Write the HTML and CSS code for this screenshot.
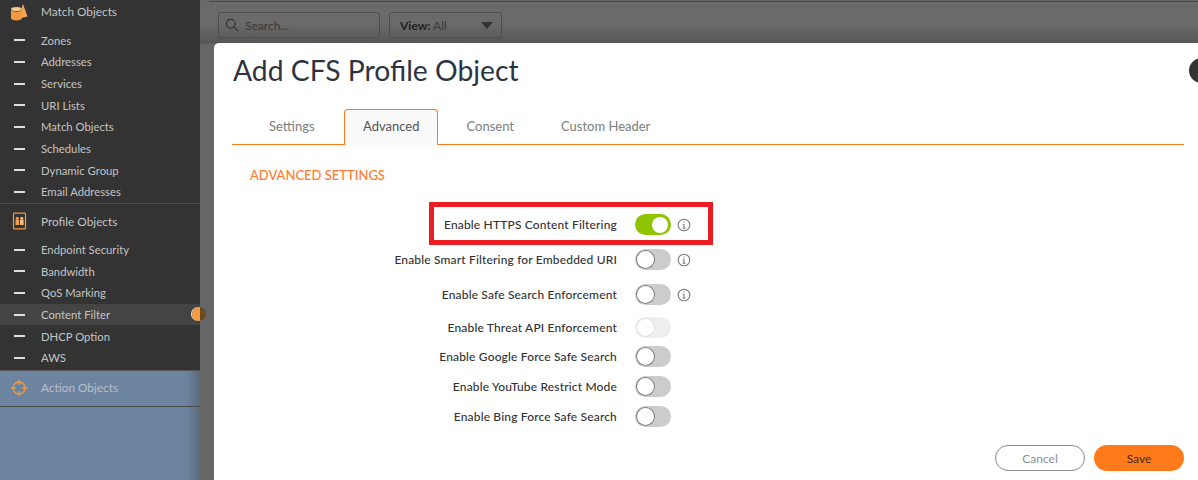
FILE: index.html
```html
<!DOCTYPE html>
<html lang="en">
<head>
<meta charset="utf-8">
<title>Add CFS Profile Object</title>
<link rel="stylesheet" href="styles.css">
</head>
<body>
<div class="app">
  <nav class="sidebar">
    <div class="group">
      <div class="group-head group-head-first">
        <svg class="group-icon" viewBox="0 0 20 20"><path d="M14 2 18.500 14.500 13 15.800 13 5z" fill="#f6a64f"/><ellipse cx="7.500" cy="7" rx="5.500" ry="2" fill="#f9c98c"/><path d="M2 7.800c1 1.300 3.100 2 5.500 2s4.500-.7 5.500-2V16c0 1.400-2.400 2.400-5.500 2.400S2 17.400 2 16z" fill="#f29a3e"/></svg>
        <span>Match Objects</span>
      </div>
      <ul class="items">
        <li class="item"><i class="dash"></i>Zones</li>
        <li class="item"><i class="dash"></i>Addresses</li>
        <li class="item"><i class="dash"></i>Services</li>
        <li class="item"><i class="dash"></i>URI Lists</li>
        <li class="item"><i class="dash"></i>Match Objects</li>
        <li class="item"><i class="dash"></i>Schedules</li>
        <li class="item"><i class="dash"></i>Dynamic Group</li>
        <li class="item"><i class="dash"></i>Email Addresses</li>
      </ul>
    </div>
    <div class="group group-profile">
      <div class="group-head">
        <svg class="group-icon" viewBox="0 0 20 20"><rect x="4.500" y="2.200" width="12" height="15.600" rx=".8" fill="none" stroke="#f29a3e" stroke-width="1.200"/><rect x="6.500" y="8.700" width="3.600" height="5.300" fill="#f4a14a"/><circle cx="8.300" cy="7.300" r="1.500" fill="#f4a14a"/><rect x="11" y="8.700" width="3.600" height="5.300" fill="#f8c080"/><circle cx="12.800" cy="7.300" r="1.500" fill="#f8c080"/></svg>
        <span>Profile Objects</span>
      </div>
      <ul class="items">
        <li class="item"><i class="dash"></i>Endpoint Security</li>
        <li class="item"><i class="dash"></i>Bandwidth</li>
        <li class="item"><i class="dash"></i>QoS Marking</li>
        <li class="item item-active"><i class="dash"></i>Content Filter<b class="marker"></b></li>
        <li class="item"><i class="dash"></i>DHCP Option</li>
        <li class="item"><i class="dash"></i>AWS</li>
      </ul>
    </div>
    <div class="group-action">
      <div class="action-head">
        <svg class="group-icon" viewBox="0 0 20 20" fill="none" stroke="#f29a3e" stroke-width="1.300"><circle cx="10" cy="10" r="6"/><path d="M10 1.800v5M10 13.200v5M1.800 10h5M13.200 10h5"/></svg>
        <span>Action Objects</span>
      </div>
    </div>
  </nav>
  <main class="main">
    <div class="toolbar">
      <div class="search">
        <svg class="search-icon" viewBox="0 0 16 16" fill="none" stroke="#333" stroke-width="1.400"><circle cx="6.500" cy="6.500" r="5"/><path d="m10.200 10.200 4.800 4.800"/></svg>
        <span>Search...</span>
      </div>
      <div class="view"><span><b>View:</b> All</span><i class="caret"></i></div>
    </div>
    <section class="modal">
      <h1 class="title">Add CFS Profile Object</h1>
      <div class="close"></div>
      <div class="tabs">
        <div class="tab tab-first">Settings</div>
        <div class="tab tab-active">Advanced</div>
        <div class="tab">Consent</div>
        <div class="tab">Custom Header</div>
      </div>
      <h2 class="section">ADVANCED SETTINGS</h2>
      <div class="form">
        <label class="label">Enable HTTPS Content Filtering</label><span class="toggle toggle-on"></span><svg class="info" viewBox="0 0 14 14"><circle cx="7" cy="7" r="5.800"/><path d="M7 6.200v4M5.600 10.300h2.800M5.800 6.200H7M7 3.400v1.200"/></svg>
        <label class="label">Enable Smart Filtering for Embedded URI</label><span class="toggle"></span><svg class="info" viewBox="0 0 14 14"><circle cx="7" cy="7" r="5.800"/><path d="M7 6.200v4M5.600 10.300h2.800M5.800 6.200H7M7 3.400v1.200"/></svg>
        <label class="label">Enable Safe Search Enforcement</label><span class="toggle"></span><svg class="info" viewBox="0 0 14 14"><circle cx="7" cy="7" r="5.800"/><path d="M7 6.200v4M5.600 10.300h2.800M5.800 6.200H7M7 3.400v1.200"/></svg>
        <label class="label">Enable Threat API Enforcement</label><span class="toggle toggle-disabled"></span><span></span>
        <label class="label">Enable Google Force Safe Search</label><span class="toggle"></span><span></span>
        <label class="label">Enable YouTube Restrict Mode</label><span class="toggle"></span><span></span>
        <label class="label">Enable Bing Force Safe Search</label><span class="toggle"></span><span></span>
      </div>
      <div class="highlight"></div>
      <div class="actions">
        <button class="btn btn-cancel">Cancel</button>
        <button class="btn btn-save">Save</button>
      </div>
    </section>
  </main>
</div>
</body>
</html>
```
FILE: styles.css
```css
* { box-sizing: border-box; }
html, body { margin: 0; height: 480px; overflow: hidden; }
body { font-family: "Lato", "Noto Sans", sans-serif; color: #333; background: #666; }
.app { display: flex; height: 480px; width: 1198px; overflow: hidden; }

.sidebar { width: 200px; flex: none; display: flex; flex-direction: column; background: #333; color: #c4c4c4; font-size: 11.300px; position: relative; z-index: 1; }
.group-head { height: 35px; display: flex; align-items: center; font-size: 11.800px; }
.group-head-first { height: 23px; margin-bottom: 6.500px; }
.group-icon { width: 20px; height: 20px; margin: 0 12px 0 9px; flex: none; }
.group-profile { border-top: 1px solid #4d4d4d; }
.items { list-style: none; margin: 0; padding: 0; }
.item { height: 21.670px; display: flex; align-items: center; position: relative; }
.dash { width: 11px; height: 2px; background: #ddd; margin: 0 16px 0 14px; }
.item-active { background: #444; }
.marker { position: absolute; right: -6px; top: 3px; width: 14px; height: 14px; border-radius: 50%; background: linear-gradient(90deg, #f59b42 0 57%, #6a4a20 57%); box-shadow: -1px 0 0 #eee; }
.group-action { flex: 1; margin-top: 1px; background: linear-gradient(90deg, #6d84a0 93%, #5a6a7e); border-top: 1px solid #555; }
.action-head { height: 36px; padding-bottom: 1px; display: flex; align-items: center; border-bottom: 1px solid #4a4a4a; font-size: 11.800px; color: #b6c0cc; }

.main { flex: 1; position: relative; background: linear-gradient(#6a6a6a 0 24px, #555 43px, #666 44px); min-width: 0; }
.toolbar { display: flex; gap: 9px; height: 43px; padding: 11px 0 0 18px; border-top: 1px solid #666; position: relative; }
.toolbar::before { content: ""; position: absolute; left: 9px; right: 0; top: 0; height: 1px; background: #6b3f1c; }
.search, .view { height: 26px; border: 1px solid #4e4e4e; border-radius: 3px; display: flex; align-items: center; font-size: 12px; color: #3a3a3a; }
.search { width: 162px; padding-left: 6px; gap: 6px; }
.search-icon { width: 14px; height: 14px; }
.view { width: 113px; padding: 0 8px 0 10px; justify-content: space-between; }
.view b { font-weight: 700; color: #222; }
.caret { border: 6.500px solid transparent; border-top: 7px solid #333; border-bottom: 0; }

.modal { position: absolute; left: 14px; top: 43px; right: 0; bottom: 0; background: #fff; border-radius: 5px 0 0 0; padding: 0 14px 0 18px; }
.title { margin: 8px 0 0 1px; height: 44px; font-size: 28.300px; line-height: 38px; font-weight: 400; color: #2d3340; }
.close { position: absolute; right: -16px; top: 15px; width: 25px; height: 25px; border-radius: 50%; background: #333; }
.tabs { margin-top: 14px; height: 36px; display: flex; gap: 9px; padding-left: 18px; border-bottom: 1px solid #ff7a1a; }
.tab { height: 36px; padding: 0 18px 4px; display: flex; align-items: center; font-size: 13px; color: #7d7d7d; border: 1px solid transparent; border-bottom: 0; border-radius: 4px 4px 0 0; }
.tab-first { width: 85px; }
.tab-active { background: #f9f9f9; border-color: #ff7a1a; color: #555; height: 36px; }
.section { margin: 22px 0 0 18px; height: 16px; font-size: 13px; line-height: 16px; font-weight: 500; color: #ff7a2a; }
.form { margin-top: 24px; display: grid; grid-template-columns: 385px 18px 36px 6px 14px; grid-template-rows: 35px 35px 35px 31px 27px 33px 27px; align-items: center; }
.label { grid-column: 1; text-align: right; font-size: 12px; font-weight: 500; letter-spacing: .16px; color: #333; white-space: nowrap; }
.toggle { grid-column: 3; width: 36px; height: 21px; border-radius: 11px; background: #ccc; position: relative; }
.toggle::after { content: ""; position: absolute; left: 1px; top: 1px; width: 19px; height: 19px; border-radius: 50%; background: #fff; box-shadow: 0 0 0 1px #777 inset; }
.toggle-on { background: #8fc400; }
.toggle-on::after { left: 17px; top: 2.500px; width: 16px; height: 16px; box-shadow: none; }
.toggle-disabled { background: #eee; }
.toggle-disabled::after { box-shadow: 0 0 0 1px #ddd inset; }
.info { grid-column: 5; width: 14px; height: 14px; fill: none; stroke: #777; stroke-width: 1.100; }
.highlight { position: absolute; left: 215px; top: 159px; width: 284px; height: 43px; border: 5px solid #ed1c24; }
.actions { position: absolute; right: 14px; top: 402px; display: flex; gap: 9px; }
.btn { width: 90px; height: 26px; border-radius: 13px; font: 12px "Lato", "Noto Sans", sans-serif; padding: 0; }
.btn-cancel { background: #fff; border: 1px solid #8a8a8a; color: #8a8f98; }
.btn-save { background: #ff7a1a; border: 0; color: #4a2a10; }
```
